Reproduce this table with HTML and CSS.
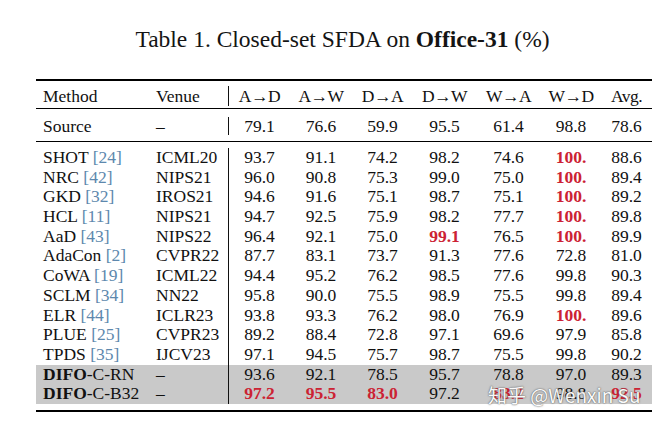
FILE: index.html
```html
<!DOCTYPE html>
<html lang="en">
<head>
<meta charset="utf-8">
<title>Table 1</title>
<link rel="stylesheet" href="styles.css">
</head>
<body>
<main class="page">
  <h1 class="title">Table 1. Closed-set SFDA on <b>Office-31</b> (%)</h1>
  <div class="tbl">
    <div class="rule thick"></div>
    <div class="sec head">
      <div class="row">
        <span class="c l m">Method</span><span class="c l v">Venue</span>
        <span class="c n bar">A→D</span><span class="c n">A→W</span><span class="c n">D→A</span><span class="c n">D→W</span><span class="c n">W→A</span><span class="c n">W→D</span><span class="c n">Avg.</span>
      </div>
    </div>
    <div class="rule thin"></div>
    <div class="sec src">
      <div class="row">
        <span class="c l m">Source</span><span class="c l v">–</span>
        <span class="c n bar">79.1</span><span class="c n">76.6</span><span class="c n">59.9</span><span class="c n">95.5</span><span class="c n">61.4</span><span class="c n">98.8</span><span class="c n">78.6</span>
      </div>
    </div>
    <div class="rule thin"></div>
    <div class="sec body">
      <div class="row"><span class="c l m">SHOT <span class="cite">[24]</span></span><span class="c l v">ICML20</span><span class="c n bar">93.7</span><span class="c n">91.1</span><span class="c n">74.2</span><span class="c n">98.2</span><span class="c n">74.6</span><span class="c n best">100.</span><span class="c n">88.6</span></div>
      <div class="row"><span class="c l m">NRC <span class="cite">[42]</span></span><span class="c l v">NIPS21</span><span class="c n bar">96.0</span><span class="c n">90.8</span><span class="c n">75.3</span><span class="c n">99.0</span><span class="c n">75.0</span><span class="c n best">100.</span><span class="c n">89.4</span></div>
      <div class="row"><span class="c l m">GKD <span class="cite">[32]</span></span><span class="c l v">IROS21</span><span class="c n bar">94.6</span><span class="c n">91.6</span><span class="c n">75.1</span><span class="c n">98.7</span><span class="c n">75.1</span><span class="c n best">100.</span><span class="c n">89.2</span></div>
      <div class="row"><span class="c l m">HCL <span class="cite">[11]</span></span><span class="c l v">NIPS21</span><span class="c n bar">94.7</span><span class="c n">92.5</span><span class="c n">75.9</span><span class="c n">98.2</span><span class="c n">77.7</span><span class="c n best">100.</span><span class="c n">89.8</span></div>
      <div class="row"><span class="c l m">AaD <span class="cite">[43]</span></span><span class="c l v">NIPS22</span><span class="c n bar">96.4</span><span class="c n">92.1</span><span class="c n">75.0</span><span class="c n best">99.1</span><span class="c n">76.5</span><span class="c n best">100.</span><span class="c n">89.9</span></div>
      <div class="row"><span class="c l m">AdaCon <span class="cite">[2]</span></span><span class="c l v">CVPR22</span><span class="c n bar">87.7</span><span class="c n">83.1</span><span class="c n">73.7</span><span class="c n">91.3</span><span class="c n">77.6</span><span class="c n">72.8</span><span class="c n">81.0</span></div>
      <div class="row"><span class="c l m">CoWA <span class="cite">[19]</span></span><span class="c l v">ICML22</span><span class="c n bar">94.4</span><span class="c n">95.2</span><span class="c n">76.2</span><span class="c n">98.5</span><span class="c n">77.6</span><span class="c n">99.8</span><span class="c n">90.3</span></div>
      <div class="row"><span class="c l m">SCLM <span class="cite">[34]</span></span><span class="c l v">NN22</span><span class="c n bar">95.8</span><span class="c n">90.0</span><span class="c n">75.5</span><span class="c n">98.9</span><span class="c n">75.5</span><span class="c n">99.8</span><span class="c n">89.4</span></div>
      <div class="row"><span class="c l m">ELR <span class="cite">[44]</span></span><span class="c l v">ICLR23</span><span class="c n bar">93.8</span><span class="c n">93.3</span><span class="c n">76.2</span><span class="c n">98.0</span><span class="c n">76.9</span><span class="c n best">100.</span><span class="c n">89.6</span></div>
      <div class="row"><span class="c l m">PLUE <span class="cite">[25]</span></span><span class="c l v">CVPR23</span><span class="c n bar">89.2</span><span class="c n">88.4</span><span class="c n">72.8</span><span class="c n">97.1</span><span class="c n">69.6</span><span class="c n">97.9</span><span class="c n">85.8</span></div>
      <div class="row"><span class="c l m">TPDS <span class="cite">[35]</span></span><span class="c l v">IJCV23</span><span class="c n bar">97.1</span><span class="c n">94.5</span><span class="c n">75.7</span><span class="c n">98.7</span><span class="c n">75.5</span><span class="c n">99.8</span><span class="c n">90.2</span></div>
      <div class="row hl"><span class="c l m"><b>DIFO</b>-C-RN</span><span class="c l v">–</span><span class="c n bar">93.6</span><span class="c n">92.1</span><span class="c n">78.5</span><span class="c n">95.7</span><span class="c n">78.8</span><span class="c n">97.0</span><span class="c n">89.3</span></div>
      <div class="row hl"><span class="c l m"><b>DIFO</b>-C-B32</span><span class="c l v">–</span><span class="c n bar best">97.2</span><span class="c n best">95.5</span><span class="c n best">83.0</span><span class="c n">97.2</span><span class="c n best">83.2</span><span class="c n">98.8</span><span class="c n best">92.5</span></div>
    </div>
    <div class="rule thick"></div>
    <div class="watermark">知乎 @Wenxin Su</div>
  </div>
</main>
</body>
</html>
```
FILE: styles.css
```css
html, body {
  margin: 0;
  padding: 0;
  background: #ffffff;
}
body {
  font-family: "Liberation Serif", "Times New Roman", serif;
  color: #111111;
}
.page {
  width: 665px;
  height: 427px;
  overflow: hidden;
}
.title {
  margin: 26px 0 27px;
  padding-left: 20px;
  font-size: 23.5px;
  line-height: 26px;
  font-weight: normal;
  text-align: center;
  color: #141414;
}
.title b {
  font-weight: bold;
}
.tbl {
  position: relative;
  margin-left: 36px;
  width: 616px;
}
.rule {
  background: #000000;
}
.rule.thick {
  height: 2px;
}
.rule.thin {
  height: 1px;
}
.sec.head {
  padding: 5px 0 2px;
}
.sec.src {
  padding: 8px 0 6px;
}
.sec.body {
  padding: 6px 0 6px;
}
.row {
  display: grid;
  grid-template-columns: 114px 78px 62px 62px 61px 63px 65px 60px 51px;
  height: 19.7px;
  font-size: 17.5px;
  line-height: 19.7px;
}
.head .row {
  height: 20px;
  line-height: 20px;
}
.src .row {
  height: 18px;
  line-height: 18px;
}
.c {
  white-space: nowrap;
}
.c.l.m {
  padding-left: 7px;
}
.c.l.v {
  padding-left: 6px;
}
.c.n {
  text-align: center;
}
.head .c.n {
  letter-spacing: -0.5px;
}
.c.bar {
  border-left: 1px solid #111111;
}
.cite {
  color: #5d88ad;
}
.best {
  color: #cc2233;
  font-weight: bold;
}
.row.hl {
  background: #c9c9c9;
}
.watermark {
  position: absolute;
  left: 452px;
  top: 305px;
  font-family: "Noto Sans CJK SC", "Noto Sans", sans-serif;
  font-size: 19px;
  line-height: 22px;
  color: #ffffff;
  white-space: nowrap;
  text-shadow: 0 0 1px #555555, 0 0 2px #666666;
  opacity: 0.92;
}
```
